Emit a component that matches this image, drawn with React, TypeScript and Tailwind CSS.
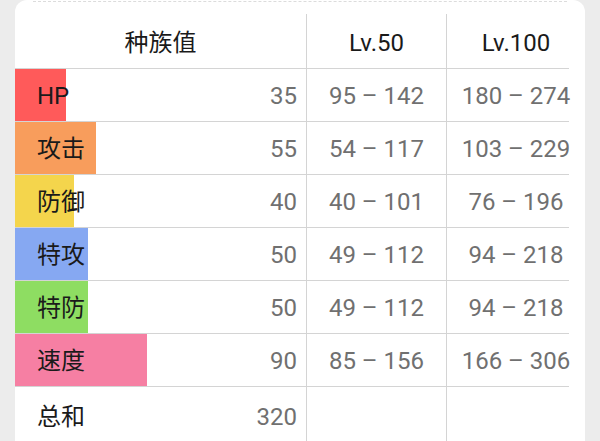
import React from "react";

const rows = [
  { label: "HP", base: 35, lv50: "95 – 142", lv100: "180 – 274", color: "bg-[#ff5a5a]" },
  { label: "攻击", base: 55, lv50: "54 – 117", lv100: "103 – 229", color: "bg-[#f89d5c]" },
  { label: "防御", base: 40, lv50: "40 – 101", lv100: "76 – 196", color: "bg-[#f4d54c]" },
  { label: "特攻", base: 50, lv50: "49 – 112", lv100: "94 – 218", color: "bg-[#86a8f2]" },
  { label: "特防", base: 50, lv50: "49 – 112", lv100: "94 – 218", color: "bg-[#8edd62]" },
  { label: "速度", base: 90, lv50: "85 – 156", lv100: "166 – 306", color: "bg-[#f67fa3]" },
];

const font = "font-['Roboto','Noto_Sans_CJK_SC',sans-serif]";

export default function App() {
  return (
    <div className={`w-[600px] h-[441px] bg-[#ececec] flex px-[15px] overflow-hidden ${font}`}>
      <div className="flex-1 bg-white rounded-t-[12px] flex flex-col">
        <div className="mt-[1px] mx-[18px] border-t border-dashed border-[#dcdcdc]" />
        <div className="mt-[12px] flex flex-col w-[554px] text-[24px] leading-none">
          <div className="flex h-[55px] border-b border-[#d4d4d4] text-[#1a1a1a]">
            <div className="w-[292px] border-r border-[#d4d4d4] flex items-center justify-center pt-[4px]">种族值</div>
            <div className="w-[140px] border-r border-[#d4d4d4] flex items-center justify-center pt-[4px]">Lv.50</div>
            <div className="w-[122px] pl-[16px] flex items-center justify-center pt-[4px]">Lv.100</div>
          </div>
          {rows.map((r) => (
            <div key={r.label} className="flex h-[53px] border-b border-[#d4d4d4]">
              <div className="relative w-[292px] border-r border-[#d4d4d4] flex items-center justify-between pl-[22px] pr-[9px] pt-[2px]">
                <div className={`absolute left-0 top-0 bottom-0 ${r.color}`} style={{ width: `${r.base * 1.466}px` }} />
                <span className="relative text-[#1a1a1a]">{r.label}</span>
                <span className="relative text-[#707070]">{r.base}</span>
              </div>
              <div className="w-[140px] border-r border-[#d4d4d4] flex items-center justify-center text-[#707070] whitespace-pre pt-[2px]">{r.lv50}</div>
              <div className="w-[122px] pl-[16px] flex items-center justify-center text-[#707070] whitespace-pre pt-[2px]">{r.lv100}</div>
            </div>
          ))}
          <div className="flex h-[60px]">
            <div className="w-[292px] border-r border-[#d4d4d4] flex items-start justify-between pl-[22px] pr-[9px] pt-[18px]">
              <span className="text-[#1a1a1a]">总和</span>
              <span className="text-[#707070]">320</span>
            </div>
            <div className="w-[140px] border-r border-[#d4d4d4]" />
            <div className="w-[122px]" />
          </div>
        </div>
      </div>
    </div>
  );
}
